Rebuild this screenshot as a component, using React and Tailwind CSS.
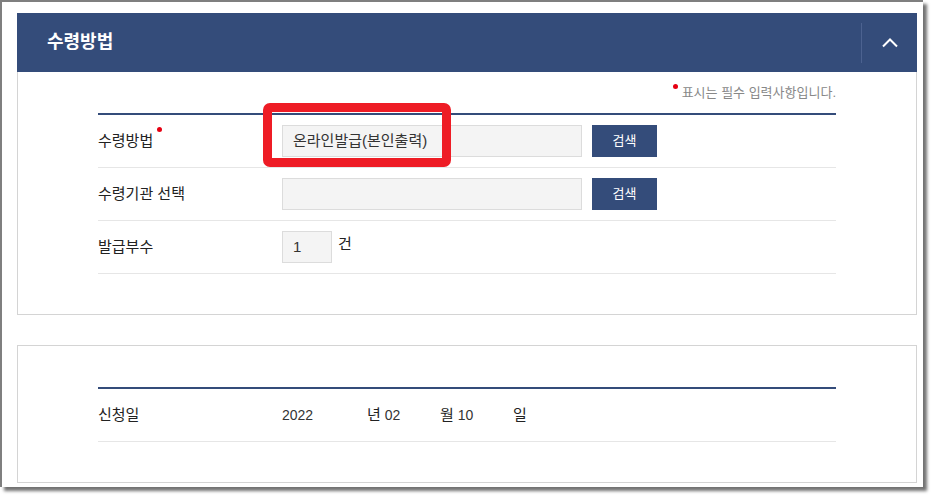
import React from 'react';

const font = { fontFamily: '"Liberation Sans", "Noto Sans CJK KR", sans-serif' };

const RedDot = ({ className = '' }) => (
  <span className={`inline-block w-[5px] h-[5px] rounded-full bg-[#e60012] ${className}`}></span>
);

const FormRow = ({ label, required, children }) => (
  <div className="flex items-center h-[53px] border-b border-[#e6e6e6]">
    <div className="w-[184px] flex items-center text-[15px] text-[#222]">
      <span>{label}</span>
      {required && <RedDot className="relative -top-[12px] ml-[4px]" />}
    </div>
    <div className="flex items-center">{children}</div>
  </div>
);

const Field = ({ value, width = 'w-[300px]' }) => (
  <div className={`${width} h-[32px] bg-[#f4f4f4] border border-[#dcdcdc] flex items-center px-[10px] text-[15px] text-[#333]`}>
    {value}
  </div>
);

const SearchButton = () => (
  <button className="ml-[10px] w-[65px] h-[32px] bg-[#344c7a] text-white text-[13px] flex items-center justify-center">
    검색
  </button>
);

const App = () => {
  return (
    <div className="w-[934px] h-[499px] bg-white overflow-hidden" style={font}>
      <div className="w-[923px] h-[487px] bg-white border-t-2 border-l-2 border-[#7f7f7f] shadow-[4px_4px_3px_rgba(0,0,0,0.55)] pt-[11px] pl-[15px]">
        <div className="w-[900px]">
          {/* Panel 1 */}
          <div>
            <div className="h-[59px] bg-[#344c7a] flex items-center justify-between">
              <h2 className="pl-[30px] text-[18px] font-bold text-white">수령방법</h2>
              <div className="flex items-center h-full">
                <div className="w-px h-[40px] bg-[#4c6290]"></div>
                <div className="w-[55px] flex items-center justify-center">
                  <svg width="18" height="11" viewBox="0 0 18 11" fill="none">
                    <path d="M2 9.5 L9 2.5 L16 9.5" stroke="white" strokeWidth="2" />
                  </svg>
                </div>
              </div>
            </div>
            <div className="border border-t-0 border-[#d4d4d4] pt-[11px] pb-[40px] px-[80px]">
              <div className="h-[20px] flex items-center justify-end text-[13px] text-[#888]">
                <RedDot className="self-start mt-[1px] mr-[4px]" />
                <span>표시는 필수 입력사항입니다.</span>
              </div>
              <div className="mt-[10px] border-t-2 border-[#344c7a]">
                <FormRow label="수령방법" required>
                  <div className="relative">
                    <Field value="온라인발급(본인출력)" />
                    <div className="absolute left-[-19px] top-[-22px] w-[188px] h-[64px] border-[9px] border-[#ee1c25] rounded-[7px]"></div>
                  </div>
                  <SearchButton />
                </FormRow>
                <FormRow label="수령기관 선택">
                  <Field value="" />
                  <SearchButton />
                </FormRow>
                <FormRow label="발급부수">
                  <Field value="1" width="w-[50px]" />
                  <span className="ml-[6px] -mt-[6px] text-[15px] text-[#222]">건</span>
                </FormRow>
              </div>
            </div>
          </div>

          {/* Panel 2 */}
          <div className="mt-[30px] border border-[#d4d4d4] pt-[41px] pb-[40px] px-[80px]">
            <div className="border-t-2 border-[#344c7a]">
              <div className="flex items-center h-[53px] border-b border-[#e6e6e6]">
                <div className="w-[184px] text-[15px] text-[#222]">신청일</div>
                <div className="flex items-center text-[14px] text-[#333]">
                  <span className="w-[85px]">2022</span>
                  <span className="w-[73px]"><span className="text-[15px] text-[#222]">년</span> 02</span>
                  <span className="w-[73px]"><span className="text-[15px] text-[#222]">월</span> 10</span>
                  <span className="text-[15px] text-[#222]">일</span>
                </div>
              </div>
            </div>
          </div>
        </div>
      </div>
    </div>
  );
};

export default App;
